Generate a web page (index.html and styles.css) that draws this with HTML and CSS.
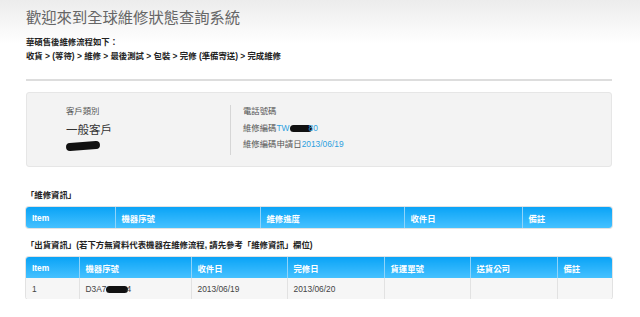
FILE: index.html
```html
<!DOCTYPE html>
<html lang="zh-Hant">
<head>
  <meta charset="UTF-8" />
  <title>全球維修狀態查詢系統</title>
  <link rel="stylesheet" href="styles.css">
</head>
<body>
  <div class="page">
    <h1>歡迎來到全球維修狀態查詢系統</h1>

    <div class="flow">
      <p class="flow-title">華碩售後維修流程如下：</p>
      <p>收貨 &gt; (等待) &gt; 維修 &gt; 最後測試 &gt; 包裝 &gt; 完修 (準備寄送) &gt; 完成維修</p>
    </div>

    <hr>

    <div class="info-box">
      <div class="info-left">
        <div class="label">客戶類別</div>
        <div class="big">一般客戶</div>
        <div class="blot blot-name"></div>
      </div>
      <div class="info-right">
        <div class="label">電話號碼</div>
        <div class="label">維修編碼<a href="#">TW<span class="blot blot-code"></span>80</a></div>
        <div class="label">維修編碼申請日<a href="#">2013/06/19</a></div>
      </div>
    </div>

    <h3>「維修資訊」</h3>
    <table class="grid">
      <tr>
        <th class="w89">Item</th>
        <th class="w145">機器序號</th>
        <th class="w144">維修進度</th>
        <th class="w118">收件日</th>
        <th>備註</th>
      </tr>
    </table>

    <h3>「出貨資訊」(若下方無資料代表機器在維修流程, 請先參考「維修資訊」欄位)</h3>
    <table class="grid">
      <tr>
        <th class="w53">Item</th>
        <th class="w112">機器序號</th>
        <th class="w96">收件日</th>
        <th class="w97">完修日</th>
        <th class="w86">貨運單號</th>
        <th class="w87">送貨公司</th>
        <th>備註</th>
      </tr>
      <tr>
        <td>1</td>
        <td>D3A7<span class="blot blot-sn"></span>4</td>
        <td>2013/06/19</td>
        <td>2013/06/20</td>
        <td></td>
        <td></td>
        <td></td>
      </tr>
    </table>
  </div>
</body>
</html>
```

FILE: styles.css
```css
* {
  margin: 0;
  padding: 0;
  box-sizing: border-box;
}

body {
  font-family: "Liberation Sans", Arial, "Noto Sans CJK TC", sans-serif;
  color: #333;
  background: linear-gradient(#ececec 0, #fff 44px) no-repeat;
  width: 640px;
}

.page {
  width: 586px;
  margin-left: 26px;
  padding-top: 9px;
}

h1 {
  font-size: 15.3px;
  font-weight: normal;
  color: #666;
  line-height: 18px;
}

.flow {
  margin-top: 8px;
  font-size: 8.4px;
  font-weight: bold;
  color: #222;
  line-height: 14px;
}

hr {
  border: none;
  border-top: 2px solid #ddd;
  margin-top: 16px;
}

.info-box {
  margin-top: 11px;
  height: 75px;
  background: #f3f3f3;
  border: 1px solid #e6e6e6;
  border-radius: 3px;
  display: flex;
  padding-top: 12px;
}

.info-left {
  width: 165px;
  margin-left: 39px;
  border-right: 1px solid #d6d6d6;
  height: 50px;
}

.info-right {
  padding-left: 12px;
  margin-top: -2px;
}

.label {
  font-size: 8.4px;
  color: #555;
  line-height: 16.5px;
}

.info-left .label {
  line-height: 13px;
}

.big {
  font-size: 11.5px;
  color: #333;
  line-height: 16px;
  margin-top: 4px;
}

a {
  color: #2d9fe0;
  text-decoration: none;
}

.blot {
  display: inline-block;
  background: #111;
  border-radius: 4px;
  vertical-align: middle;
}

.blot-name {
  display: block;
  width: 34px;
  height: 8px;
  margin-top: 4px;
  transform: rotate(-4deg);
}

.blot-code {
  width: 22px;
  height: 7px;
  margin-right: -3px;
}

.blot-sn {
  width: 22px;
  height: 7px;
  margin-right: -2px;
}

h3 {
  font-size: 8.4px;
  font-weight: bold;
  color: #222;
  line-height: 12px;
  margin-top: 22px;
  margin-bottom: 6px;
}

.grid + h3 {
  margin-top: 11px;
}

.grid {
  width: 586px;
  border-collapse: collapse;
  table-layout: fixed;
  border-radius: 3px;
  overflow: hidden;
  box-shadow: 0 0 0 1px #e2e2e2;
}

.grid th {
  height: 21px;
  background: linear-gradient(#0aa3f6, #45c1ff);
  color: #fff;
  font-size: 8.4px;
  font-weight: bold;
  text-align: left;
  padding-left: 6px;
  border-left: 1px solid #8fd4fa;
}

.grid td {
  height: 21px;
  background: #f6f6f6;
  color: #444;
  font-size: 8.4px;
  padding-left: 6px;
  border-left: 1px solid #e2e2e2;
}

.grid th:first-child,
.grid td:first-child {
  border-left: none;
}

.w89 { width: 89px; }
.w145 { width: 145px; }
.w144 { width: 144px; }
.w118 { width: 118px; }
.w53 { width: 53px; }
.w112 { width: 112px; }
.w96 { width: 96px; }
.w97 { width: 97px; }
.w86 { width: 86px; }
.w87 { width: 87px; }
```
